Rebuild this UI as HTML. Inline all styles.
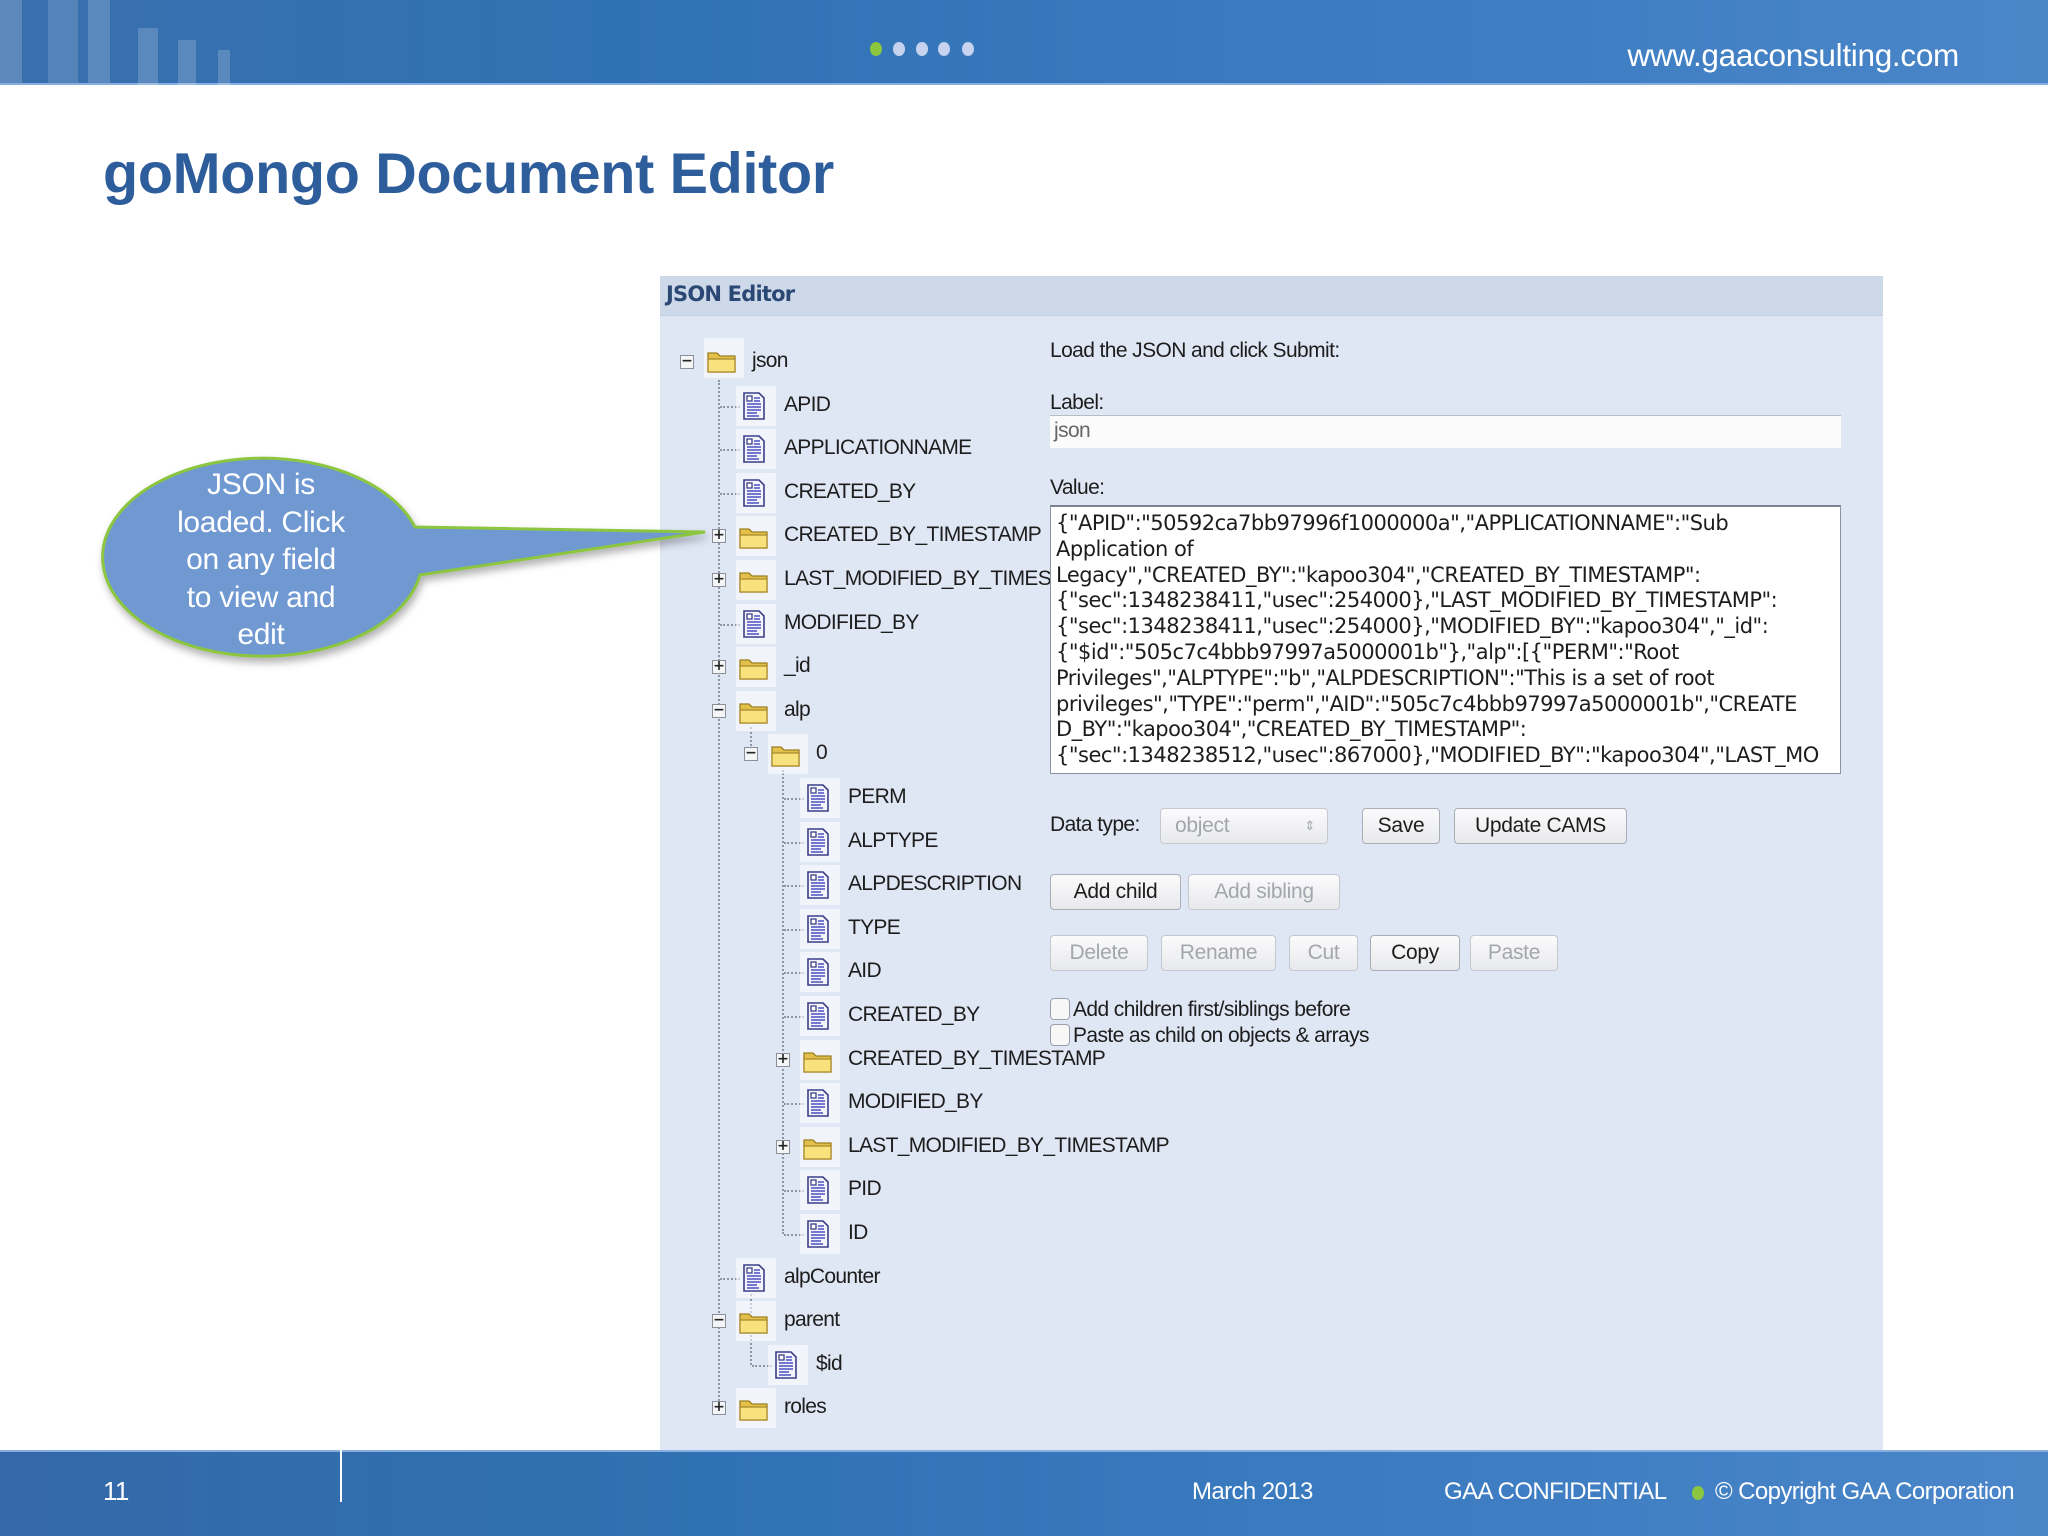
<!DOCTYPE html>
<html><head><meta charset="utf-8">
<style>
*{margin:0;padding:0;box-sizing:border-box}
body{width:2048px;height:1536px;position:relative;overflow:hidden;background:#fff;font-family:"Liberation Sans",Arial,sans-serif}
.a{position:absolute}
#hdr{left:0;top:0;width:2048px;height:85px;background:linear-gradient(90deg,#3a6fae 0%,#2f72b3 30%,#3d7cc2 70%,#4a86c8 100%);border-bottom:2px solid #86aee0}
.stripe{position:absolute;top:0;height:83px;background:rgba(255,255,255,0.18)}
.dot{position:absolute;top:42px;width:12px;height:14px;border-radius:50%;background:#c7d3ee}
#ftr{left:0;top:1450px;width:2048px;height:86px;background:linear-gradient(90deg,#3468a8 0%,#2f72b3 35%,#3d7cc2 70%,#4a86c8 100%);border-top:2px solid #86aee0}
.ft{position:absolute;color:#fff;font-size:24px;top:1478px;letter-spacing:-0.6px}
#panel{left:660px;top:276px;width:1223px;height:1174px;background:#dfe6f4}
#phd{left:660px;top:276px;width:1223px;height:40px;background:#cdd8e9;border-bottom:1px solid #c3cee0}
.r{position:absolute;height:32px}
.r .e{position:absolute;left:0;top:9px;width:14px;height:14px;border:1px solid #8a8f99;background:#f4f5f7;font:bold 14px/11px "DejaVu Sans",sans-serif;text-align:center;color:#222}
.r .i{position:absolute;left:24px;top:0;width:40px;height:40px;background:rgba(255,255,255,0.55)}
.r svg{position:absolute}
.r .t{position:absolute;left:72px;top:3px;font-size:21px;color:#1d1d1d;white-space:nowrap;letter-spacing:-0.7px}
.vl{position:absolute;border-left:2px dotted #8e96a6;width:0}
.hl{position:absolute;border-top:2px dotted #8e96a6;height:0}
.lbl{position:absolute;font-size:21px;color:#1d1d1d;letter-spacing:-0.6px}
.btn{position:absolute;height:36px;border:1px solid #a9adb5;border-radius:4px;background:linear-gradient(#fbfbfc,#e8e9ec);font-size:21px;text-align:center;line-height:33px;color:#1d1d1d;letter-spacing:-0.3px}
.dis{color:#a3a6ad;border-color:#c5c8ce}
.chk{position:absolute;width:20px;height:22px;border:1px solid #9aa0aa;border-radius:4px;background:#f7f7f8}
</style></head><body>
<div id="hdr" class="a">
<div class="stripe" style="left:0;width:22px"></div>
<div class="stripe" style="left:48px;width:30px;background:rgba(255,255,255,0.14)"></div>
<div class="stripe" style="left:88px;width:22px"></div>
<div class="stripe" style="left:138px;width:20px;top:28px"></div>
<div class="stripe" style="left:178px;width:18px;top:40px"></div>
<div class="stripe" style="left:218px;width:12px;top:50px"></div>
<div class="dot" style="left:870px;background:#8cc63f"></div>
<div class="dot" style="left:893px"></div>
<div class="dot" style="left:916px"></div>
<div class="dot" style="left:938px"></div>
<div class="dot" style="left:962px"></div>
<div class="a" style="right:89px;top:37px;color:#fff;font-size:31.5px;letter-spacing:-0.3px">www.gaaconsulting.com</div>
</div>

<div class="a" style="left:103px;top:141px;font-size:57.5px;font-weight:bold;color:#2e5d9c;letter-spacing:-0.3px">goMongo Document Editor</div>

<div id="panel" class="a"></div>
<div id="phd" class="a"><div class="a" style="left:6px;top:6px;font:bold 21px 'DejaVu Sans',sans-serif;color:#2b4874;letter-spacing:-0.8px">JSON Editor</div></div>

<!-- tree lines -->
<div class="vl" style="left:718px;top:380px;height:1028px"></div>
<div class="vl" style="left:750px;top:727px;height:27px"></div>
<div class="vl" style="left:782px;top:770px;height:464px"></div>
<div class="vl" style="left:750px;top:1294px;height:71px"></div>
<div class="hl" style="left:720px;top:406px;width:20px"></div>
<div class="hl" style="left:720px;top:449px;width:20px"></div>
<div class="hl" style="left:720px;top:493px;width:20px"></div>
<div class="hl" style="left:720px;top:624px;width:20px"></div>
<div class="hl" style="left:720px;top:1278px;width:20px"></div>
<div class="hl" style="left:784px;top:798px;width:20px"></div>
<div class="hl" style="left:784px;top:842px;width:20px"></div>
<div class="hl" style="left:784px;top:885px;width:20px"></div>
<div class="hl" style="left:784px;top:929px;width:20px"></div>
<div class="hl" style="left:784px;top:972px;width:20px"></div>
<div class="hl" style="left:784px;top:1016px;width:20px"></div>
<div class="hl" style="left:784px;top:1103px;width:20px"></div>
<div class="hl" style="left:784px;top:1190px;width:20px"></div>
<div class="hl" style="left:784px;top:1234px;width:20px"></div>
<div class="hl" style="left:752px;top:1365px;width:20px"></div>

<svg width="0" height="0" style="position:absolute">
<defs>
<symbol id="doc" viewBox="0 0 24 28"><path d="M2 1h15l5 5v21H2z" fill="#f4f4fb" stroke="#3b3f8a" stroke-width="1.6"/><rect x="5" y="4" width="5" height="5" fill="#fff" stroke="#3b3f8a" stroke-width="1.3"/><path d="M12 6h6M12 9h6M5 12h14M5 15h14M5 18h14M5 21h10M5 24h12" stroke="#4a4fc0" stroke-width="1.6"/></symbol>
<symbol id="fold" viewBox="0 0 32 26"><path d="M2 5h9l3 3h15v16H2z" fill="#e3c04a" stroke="#9c7f22" stroke-width="1.3"/><path d="M2 11h27v13H2z" fill="#f8e27e" stroke="#a8892a" stroke-width="1.2"/></symbol>
</defs></svg>

<!-- rows -->
<div class="r" style="left:680px;top:346px"><div class="e">−</div><div class="i" style="top:-8px"></div><svg style="left:26px;top:2px" width="32" height="26"><use href="#fold"/></svg><div class="t">json</div></div>
<div class="r" style="left:712px;top:390px"><div class="i" style="top:-4px"></div><svg style="left:30px;top:2px" width="24" height="28"><use href="#doc"/></svg><div class="t">APID</div></div>
<div class="r" style="left:712px;top:433px"><div class="i" style="top:-4px"></div><svg style="left:30px;top:2px" width="24" height="28"><use href="#doc"/></svg><div class="t">APPLICATIONNAME</div></div>
<div class="r" style="left:712px;top:477px"><div class="i" style="top:-4px"></div><svg style="left:30px;top:2px" width="24" height="28"><use href="#doc"/></svg><div class="t">CREATED_BY</div></div>
<div class="r" style="left:712px;top:520px"><div class="e">+</div><div class="i" style="top:-4px"></div><svg style="left:26px;top:4px" width="32" height="26"><use href="#fold"/></svg><div class="t">CREATED_BY_TIMESTAMP</div></div>
<div class="r" style="left:712px;top:564px"><div class="e">+</div><div class="i" style="top:-4px"></div><svg style="left:26px;top:4px" width="32" height="26"><use href="#fold"/></svg><div class="t" style="width:266px;overflow:hidden">LAST_MODIFIED_BY_TIMESTAMP</div></div>
<div class="r" style="left:712px;top:608px"><div class="i" style="top:-4px"></div><svg style="left:30px;top:2px" width="24" height="28"><use href="#doc"/></svg><div class="t">MODIFIED_BY</div></div>
<div class="r" style="left:712px;top:651px"><div class="e">+</div><div class="i" style="top:-4px"></div><svg style="left:26px;top:4px" width="32" height="26"><use href="#fold"/></svg><div class="t">_id</div></div>
<div class="r" style="left:712px;top:695px"><div class="e">−</div><div class="i" style="top:-4px"></div><svg style="left:26px;top:4px" width="32" height="26"><use href="#fold"/></svg><div class="t">alp</div></div>
<div class="r" style="left:744px;top:738px"><div class="e">−</div><div class="i" style="top:-4px"></div><svg style="left:26px;top:4px" width="32" height="26"><use href="#fold"/></svg><div class="t">0</div></div>
<div class="r" style="left:776px;top:782px"><div class="i" style="top:-4px"></div><svg style="left:30px;top:2px" width="24" height="28"><use href="#doc"/></svg><div class="t">PERM</div></div>
<div class="r" style="left:776px;top:826px"><div class="i" style="top:-4px"></div><svg style="left:30px;top:2px" width="24" height="28"><use href="#doc"/></svg><div class="t">ALPTYPE</div></div>
<div class="r" style="left:776px;top:869px"><div class="i" style="top:-4px"></div><svg style="left:30px;top:2px" width="24" height="28"><use href="#doc"/></svg><div class="t">ALPDESCRIPTION</div></div>
<div class="r" style="left:776px;top:913px"><div class="i" style="top:-4px"></div><svg style="left:30px;top:2px" width="24" height="28"><use href="#doc"/></svg><div class="t">TYPE</div></div>
<div class="r" style="left:776px;top:956px"><div class="i" style="top:-4px"></div><svg style="left:30px;top:2px" width="24" height="28"><use href="#doc"/></svg><div class="t">AID</div></div>
<div class="r" style="left:776px;top:1000px"><div class="i" style="top:-4px"></div><svg style="left:30px;top:2px" width="24" height="28"><use href="#doc"/></svg><div class="t">CREATED_BY</div></div>
<div class="r" style="left:776px;top:1044px"><div class="e">+</div><div class="i" style="top:-4px"></div><svg style="left:26px;top:4px" width="32" height="26"><use href="#fold"/></svg><div class="t">CREATED_BY_TIMESTAMP</div></div>
<div class="r" style="left:776px;top:1087px"><div class="i" style="top:-4px"></div><svg style="left:30px;top:2px" width="24" height="28"><use href="#doc"/></svg><div class="t">MODIFIED_BY</div></div>
<div class="r" style="left:776px;top:1131px"><div class="e">+</div><div class="i" style="top:-4px"></div><svg style="left:26px;top:4px" width="32" height="26"><use href="#fold"/></svg><div class="t">LAST_MODIFIED_BY_TIMESTAMP</div></div>
<div class="r" style="left:776px;top:1174px"><div class="i" style="top:-4px"></div><svg style="left:30px;top:2px" width="24" height="28"><use href="#doc"/></svg><div class="t">PID</div></div>
<div class="r" style="left:776px;top:1218px"><div class="i" style="top:-4px"></div><svg style="left:30px;top:2px" width="24" height="28"><use href="#doc"/></svg><div class="t">ID</div></div>
<div class="r" style="left:712px;top:1262px"><div class="i" style="top:-4px"></div><svg style="left:30px;top:2px" width="24" height="28"><use href="#doc"/></svg><div class="t">alpCounter</div></div>
<div class="r" style="left:712px;top:1305px"><div class="e">−</div><div class="i" style="top:-4px"></div><svg style="left:26px;top:4px" width="32" height="26"><use href="#fold"/></svg><div class="t">parent</div></div>
<div class="r" style="left:744px;top:1349px"><div class="i" style="top:-4px"></div><svg style="left:30px;top:2px" width="24" height="28"><use href="#doc"/></svg><div class="t">$id</div></div>
<div class="r" style="left:712px;top:1392px"><div class="e">+</div><div class="i" style="top:-4px"></div><svg style="left:26px;top:4px" width="32" height="26"><use href="#fold"/></svg><div class="t">roles</div></div>

<!-- right form -->
<div class="lbl" style="left:1050px;top:339px">Load the JSON and click Submit:</div>
<div class="lbl" style="left:1050px;top:391px">Label:</div>
<div class="a" style="left:1050px;top:415px;width:791px;height:33px;background:#fbfbfc;border-top:1px solid #b8bcc4"><div class="lbl" style="left:4px;top:3px;color:#666">json</div></div>
<div class="lbl" style="left:1050px;top:476px">Value:</div>
<div class="a" style="left:1050px;top:505px;width:791px;height:269px;background:#fff;border:1px solid #8d939c;border-top:2px solid #7d838d;padding:4px 5px;font-family:'DejaVu Sans',sans-serif;font-size:21px;line-height:25.8px;color:#1d1d1d;letter-spacing:-0.5px;white-space:nowrap;overflow:hidden">{"APID":"50592ca7bb97996f1000000a","APPLICATIONNAME":"Sub<br>Application of<br>Legacy","CREATED_BY":"kapoo304","CREATED_BY_TIMESTAMP":<br>{"sec":1348238411,"usec":254000},"LAST_MODIFIED_BY_TIMESTAMP":<br>{"sec":1348238411,"usec":254000},"MODIFIED_BY":"kapoo304","_id":<br>{"$id":"505c7c4bbb97997a5000001b"},"alp":[{"PERM":"Root<br>Privileges","ALPTYPE":"b","ALPDESCRIPTION":"This is a set of root<br>privileges","TYPE":"perm","AID":"505c7c4bbb97997a5000001b","CREATE<br>D_BY":"kapoo304","CREATED_BY_TIMESTAMP":<br>{"sec":1348238512,"usec":867000},"MODIFIED_BY":"kapoo304","LAST_MO</div>

<div class="lbl" style="left:1050px;top:813px">Data type:</div>
<div class="btn dis" style="left:1160px;top:808px;width:168px;text-align:left;padding-left:14px">object<span style="position:absolute;right:12px;top:0;font-size:13px">⇕</span></div>
<div class="btn" style="left:1362px;top:808px;width:78px">Save</div>
<div class="btn" style="left:1454px;top:808px;width:173px">Update CAMS</div>
<div class="btn" style="left:1050px;top:874px;width:131px">Add child</div>
<div class="btn dis" style="left:1188px;top:874px;width:152px">Add sibling</div>
<div class="btn dis" style="left:1050px;top:935px;width:98px">Delete</div>
<div class="btn dis" style="left:1161px;top:935px;width:115px">Rename</div>
<div class="btn dis" style="left:1289px;top:935px;width:69px">Cut</div>
<div class="btn" style="left:1370px;top:935px;width:90px">Copy</div>
<div class="btn dis" style="left:1470px;top:935px;width:88px">Paste</div>
<div class="chk" style="left:1050px;top:998px"></div>
<div class="lbl" style="left:1073px;top:998px">Add children first/siblings before</div>
<div class="chk" style="left:1050px;top:1024px"></div>
<div class="lbl" style="left:1073px;top:1024px">Paste as child on objects &amp; arrays</div>

<!-- callout -->
<svg class="a" style="left:90px;top:450px" width="640" height="230">
<defs><filter id="sh" x="-10%" y="-10%" width="130%" height="140%"><feDropShadow dx="2" dy="5" stdDeviation="4" flood-color="#000" flood-opacity="0.3"/></filter></defs>
<path d="M325 77 L615 82 L330 125 A160 99 0 1 1 325 77 Z" fill="#6f99d2" stroke="#8cc63f" stroke-width="3" filter="url(#sh)"/>
</svg>
<div class="a" style="left:131px;top:466px;width:260px;text-align:center;color:#fff;font-size:30px;line-height:37.5px;letter-spacing:-0.3px">JSON is<br>loaded. Click<br>on any field<br>to view and<br>edit</div>

<div id="ftr" class="a"></div>
<div class="a" style="left:340px;top:1450px;width:2px;height:52px;background:#fff"></div>
<div class="ft" style="left:103px;top:1476px;font-size:26px">11</div>
<div class="ft" style="left:1192px">March 2013</div>
<div class="ft" style="left:1444px">GAA CONFIDENTIAL</div>
<div class="a" style="left:1692px;top:1486px;width:12px;height:14px;border-radius:50%;background:#8cc63f"></div>
<div class="ft" style="left:1715px">© Copyright GAA Corporation</div>
</body></html>
